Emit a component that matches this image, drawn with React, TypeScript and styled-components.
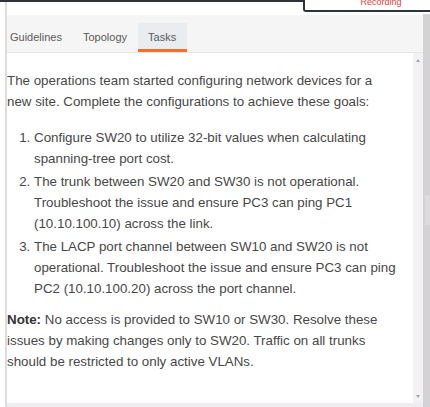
import * as React from "react";
import styled, { createGlobalStyle } from "styled-components";

const GlobalStyle = createGlobalStyle`
  html, body {
    margin: 0;
    padding: 0;
    background: #ffffff;
  }
  body {
    font-family: "Liberation Sans", Arial, sans-serif;
  }
`;

const Screen = styled.div`
  position: relative;
  width: 430px;
  height: 407px;
  overflow: hidden;
  display: flex;
  flex-direction: column;
  background: #ffffff;
`;

const TopRule = styled.div`
  width: 303px;
  height: 2px;
  flex-shrink: 0;
  background: #30343a;
`;

/* the recording badge hangs over the top edge of the window */
const RecordingTab = styled.div`
  position: absolute;
  top: 0;
  left: 303px;
  width: 152px;
  height: 10px;
  box-sizing: content-box;
  border-left: 2px solid #2c3441;
  border-bottom: 2px solid #2c3441;
  border-bottom-left-radius: 3px;
  background: #ffffff;
  overflow: hidden;
  text-align: center;
`;

const RecordingLabel = styled.span`
  display: block;
  margin-top: -3px;
  font-size: 9px;
  line-height: 11px;
  color: #e2413b;
`;

const Frame = styled.div`
  flex: 1;
  min-height: 0;
  display: flex;
  padding-left: 5px;
`;

const Panel = styled.div`
  flex: 1;
  min-width: 0;
  display: flex;
  flex-direction: column;
  border-left: 2px solid #dcdcdc;
`;

const HeaderSpace = styled.div`
  height: 13px;
  flex-shrink: 0;
`;

const TabBar = styled.div`
  height: 37px;
  flex-shrink: 0;
  display: flex;
  align-items: flex-end;
  background: #f5f5f5;
  border-bottom: 1px solid #e6e6e6;
`;

const TabList = styled.div`
  display: flex;
  margin-left: -7.5px;
`;

const Tab = styled.div<{ $active?: boolean }>`
  height: 29px;
  box-sizing: border-box;
  padding: 2px 10.5px 0;
  display: flex;
  align-items: center;
  font-size: 11px;
  color: #5a5a5a;
  background: ${(p) => (p.$active ? "#e9ecf1" : "transparent")};
  border-bottom: 3px solid ${(p) => (p.$active ? "#f2702a" : "transparent")};
`;

const Body = styled.div`
  flex: 1;
  min-height: 0;
  display: flex;
`;

const Content = styled.div`
  flex: 1;
  min-width: 0;
  padding: 17px 15px 0 0;
  font-size: 13.33px;
  line-height: 21px;
  color: #474747;
  overflow: hidden;
`;

const Paragraph = styled.p`
  margin: 0 0 15px;
`;

const Steps = styled.ol`
  margin: 0 0 10px;
  padding-left: 27px;
`;

const Step = styled.li`
  margin-bottom: 2px;
`;

const Strong = styled.b`
  color: #333333;
`;

const InnerScroll = styled.div`
  width: 10px;
  flex-shrink: 0;
  display: flex;
  flex-direction: column;
  justify-content: space-between;
  align-items: center;
  padding: 6px 0 5px;
  background: #f3f1f4;
`;

const Arrow = styled.span<{ $down?: boolean }>`
  width: 0;
  height: 0;
  border-left: 2.5px solid transparent;
  border-right: 2.5px solid transparent;
  ${(p) =>
    p.$down
      ? "border-top: 3px solid #a5a5a5;"
      : "border-bottom: 3px solid #a5a5a5;"}
`;

const BottomBar = styled.div`
  height: 4px;
  flex-shrink: 0;
  background: #efedf1;
`;

const OuterScroll = styled.div`
  width: 7px;
  flex-shrink: 0;
  margin-top: 12px;
  padding-top: 181px;
  background: #d3d3d3;
`;

const Thumb = styled.div`
  height: 30px;
  margin-left: 2px;
  background: #dbdbdb;
`;

const tabs = ["Guidelines", "Topology", "Tasks"];

export default function App() {
  return (
    <>
      <GlobalStyle />
      <Screen>
        <TopRule />
        <RecordingTab>
          <RecordingLabel>Recording</RecordingLabel>
        </RecordingTab>
        <Frame>
          <Panel>
            <HeaderSpace />
            <TabBar>
              <TabList>
                {tabs.map((t) => (
                  <Tab key={t} $active={t === "Tasks"}>
                    {t}
                  </Tab>
                ))}
              </TabList>
            </TabBar>
            <Body>
              <Content>
                <Paragraph>
                  The operations team started configuring network devices for a
                  new site. Complete the configurations to achieve these goals:
                </Paragraph>
                <Steps>
                  <Step>
                    Configure SW20 to utilize 32-bit values when calculating
                    spanning-tree port cost.
                  </Step>
                  <Step>
                    The trunk between SW20 and SW30 is not operational.
                    Troubleshoot the issue and ensure PC3 can ping PC1
                    (10.10.100.10) across the link.
                  </Step>
                  <Step>
                    The LACP port channel between SW10 and SW20 is not
                    operational. Troubleshoot the issue and ensure PC3 can ping
                    PC2 (10.10.100.20) across the port channel.
                  </Step>
                </Steps>
                <Paragraph>
                  <Strong>Note:</Strong> No access is provided to SW10 or SW30.
                  Resolve these issues by making changes only to SW20. Traffic on
                  all trunks should be restricted to only active VLANs.
                </Paragraph>
              </Content>
              <InnerScroll>
                <Arrow />
                <Arrow $down />
              </InnerScroll>
            </Body>
            <BottomBar />
          </Panel>
          <OuterScroll>
            <Thumb />
          </OuterScroll>
        </Frame>
      </Screen>
    </>
  );
}
